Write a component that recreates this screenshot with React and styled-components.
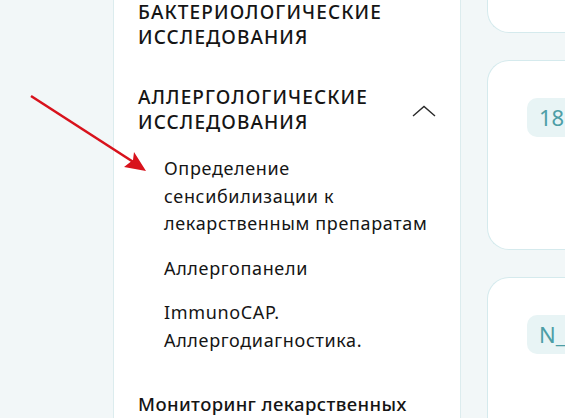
import styled, { createGlobalStyle } from 'styled-components';

const Global = createGlobalStyle`
  html, body {
    margin: 0;
    padding: 0;
    background: #f2f7f8;
    overflow: hidden;
  }
  body {
    font-family: "Noto Sans", "Open Sans", sans-serif;
    color: #151515;
  }
`

const Page = styled.div`
  position: relative;
  display: grid;
  grid-template-columns: 113px 348px 1fr;
  height: 418px;
  overflow: hidden;
`

const Sidebar = styled.aside`
  grid-column: 2;
  background: #fff;
  border-left: 1px solid #dcecee;
  border-right: 1px solid #dcecee;
  padding: 0 24px;
`

const Menu = styled.ul`
  list-style: none;
  margin: 0;
  padding: 0;
`

const Section = styled.li`
  margin-bottom: ${p => p.$gap || 0}px;
`

const SectionHead = styled.div`
  display: flex;
  align-items: flex-end;
  justify-content: space-between;
`

const SectionTitle = styled.div`
  font-size: ${p => p.$upper ? 19 : 18.5}px;
  line-height: 25px;
  font-weight: 500;
  text-transform: ${p => p.$upper ? 'uppercase' : 'none'};
  letter-spacing: ${p => p.$upper ? 1.1 : 0.4}px;
`

const Chevron = styled.svg`
  width: 24px;
  height: 12px;
  margin: 0 0 18px 0;
  flex-shrink: 0;
`

const SubList = styled.ul`
  list-style: none;
  margin: 20px 0 0;
  padding: 0 0 0 26px;
  display: flex;
  flex-direction: column;
  gap: 17px;
`

const SubItem = styled.li`
  font-size: 18px;
  line-height: 27.5px;
  font-weight: 400;
  letter-spacing: 0.65px;
`

const Cards = styled.div`
  grid-column: 3;
  margin-left: 26px;
  display: flex;
  flex-direction: column;
  gap: 27px;
`

const Card = styled.div`
  background: #fff;
  border: 1px solid #d5eaed;
  border-right: none;
  border-radius: 22px 0 0 22px;
  height: ${p => p.$h}px;
  margin-top: ${p => p.$top || 0}px;
  padding: 37px 0 0 39px;
  box-sizing: border-box;
  overflow: hidden;
`

const Badge = styled.span`
  display: inline-block;
  background: #e8f4f5;
  color: #4d9ea6;
  font-size: 22px;
  line-height: 39px;
  padding: 0 12px;
  border-radius: 10px;
  white-space: nowrap;
`

const Pointer = styled.svg`
  position: absolute;
  left: 0;
  top: 0;
  width: 160px;
  height: 180px;
  pointer-events: none;
`

export default function App() {
  return (
    <>
      <Global />
      <Page>
        <Sidebar>
          <Menu>
            <Section $gap={35}>
              <SectionTitle $upper>Бактериологические<br />исследования</SectionTitle>
            </Section>
            <Section $gap={37}>
              <SectionHead>
                <SectionTitle $upper>Аллергологические<br />исследования</SectionTitle>
                <Chevron viewBox="0 0 24 12">
                  <path d="M1 11 L12 1.5 L23 11" fill="none" stroke="#2a2a2a" strokeWidth="1.4" />
                </Chevron>
              </SectionHead>
              <SubList>
                <SubItem>Определение<br />сенсибилизации к<br />лекарственным препаратам</SubItem>
                <SubItem>Аллергопанели</SubItem>
                <SubItem>ImmunoCAP.<br />Аллергодиагностика.</SubItem>
              </SubList>
            </Section>
            <Section>
              <SectionTitle>Мониторинг лекарственных</SectionTitle>
            </Section>
          </Menu>
        </Sidebar>
        <Cards>
          <Card $h={60} $top={-27} />
          <Card $h={190}>
            <Badge>18+</Badge>
          </Card>
          <Card $h={200}>
            <Badge>N_</Badge>
          </Card>
        </Cards>
        <Pointer viewBox="0 0 160 180">
          <line x1="31" y1="96" x2="138" y2="165" stroke="#d8121c" strokeWidth="2.6" />
          <path d="M146 171 L124 167 L133 160 L134 152 Z" fill="#d8121c" />
        </Pointer>
      </Page>
    </>
  );
}
